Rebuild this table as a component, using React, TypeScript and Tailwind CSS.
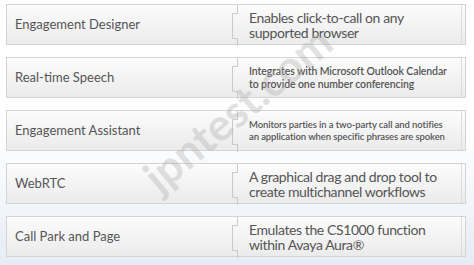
const rows = [
  {
    label: "Engagement Designer",
    lines: ["Enables click-to-call on any", "supported browser"],
    text: "text-[14px] leading-[15px] tracking-[-0.4px]",
  },
  {
    label: "Real-time Speech",
    lines: [
      "Integrates with Microsoft Outlook Calendar",
      "to provide one number conferencing",
    ],
    text: "text-[10.5px] leading-[13px] font-semibold tracking-[-0.1px]",
  },
  {
    label: "Engagement Assistant",
    lines: [
      "Monitors parties in a two-party call and notifies",
      "an application when specific phrases are spoken",
    ],
    text: "text-[9.5px] leading-[12px] font-semibold tracking-[-0.1px]",
  },
  {
    label: "WebRTC",
    lines: ["A graphical drag and drop tool to", "create multichannel workflows"],
    text: "text-[14px] leading-[15px] tracking-[-0.4px]",
  },
  {
    label: "Call Park and Page",
    lines: ["Emulates the CS1000 function", "within Avaya Aura®"],
    text: "text-[14px] leading-[15px] tracking-[-0.4px]",
  },
];

const Bracket = () => (
  <svg width="8" height="41" viewBox="0 0 8 41" className="shrink-0">
    <path
      d="M6.5 0V8.5H1.5V33.5H6.5V41"
      fill="none"
      stroke="#c9c9c9"
      strokeWidth="1"
    />
  </svg>
);

export default function App() {
  return (
    <div
      className="relative h-[265px] w-[474px] overflow-hidden bg-gradient-to-b from-white via-white to-[#e6ecf5] px-[6px] pt-[4px]"
      style={{ fontFamily: "Lato, 'Open Sans', sans-serif" }}
    >
      <div className="flex flex-col gap-[12px]">
        {rows.map((r) => (
          <div
            key={r.label}
            className="flex h-[41px] w-[460px] items-stretch border border-[#d4d4d4] bg-gradient-to-b from-[#fcfcfc] to-[#ebebeb]"
          >
            <div className="flex w-[224px] items-center pl-[8px] text-[13px] text-[#555]">
              {r.label}
            </div>
            <Bracket />
            <div className="mr-[3px] flex flex-1 flex-col justify-center border-r border-[#dcdcdc] pl-[10px] text-[#555]">
              {r.lines.map((l) => (
                <div key={l} className={`whitespace-nowrap ${r.text}`}>
                  {l}
                </div>
              ))}
            </div>
          </div>
        ))}
      </div>
      <div className="pointer-events-none absolute left-[237px] top-[108px] -translate-x-1/2 -translate-y-1/2 -rotate-[40deg] whitespace-nowrap text-[44px] font-bold text-[#aaaaaa]/35">
        jpntest.com
      </div>
    </div>
  );
}
